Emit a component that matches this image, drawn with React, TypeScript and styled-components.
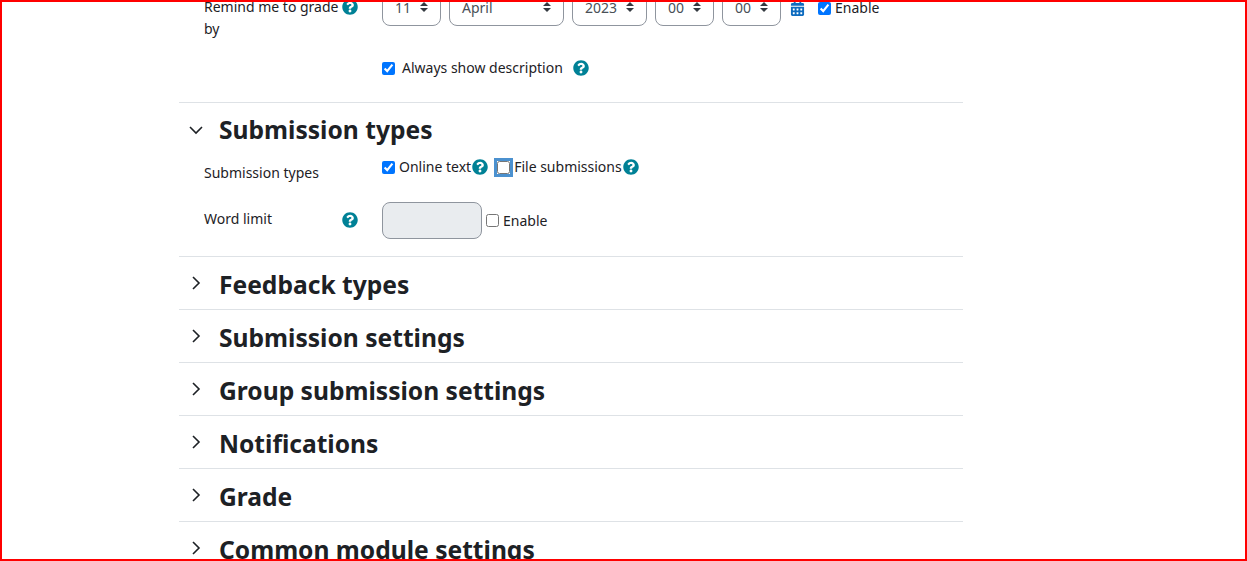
import React from "react";
import styled, { createGlobalStyle } from "styled-components";
import { FaQuestionCircle, FaCalendarAlt } from "react-icons/fa";

const Global = createGlobalStyle`
  html, body {
    margin: 0;
    padding: 0;
    background: #fff;
  }
  body {
    font-family: "Noto Sans", "Open Sans", sans-serif;
    font-size: 14px;
    color: #1d2125;
  }
`;

const Frame = styled.div`
  box-sizing: border-box;
  height: 561px;
  border: 2px solid #ff0000;
  overflow: hidden;
  background: #fff;
`;

const Form = styled.form`
  width: 784px;
  margin: -14px 0 0 177px;
`;

const DateBlock = styled.div`
  padding-bottom: 23px;
  border-bottom: 1px solid #dee2e6;
`;

const Row = styled.div<{ $mb?: number }>`
  display: flex;
  margin-bottom: ${({ $mb }) => $mb ?? 0}px;
`;

const LabelCol = styled.div`
  box-sizing: border-box;
  width: 203px;
  flex: none;
  padding-left: 25px;
  display: flex;
  justify-content: space-between;
`;

const LabelText = styled.span<{ $pt?: number; $w?: number }>`
  line-height: 22px;
  padding-top: ${({ $pt }) => $pt ?? 0}px;
  width: ${({ $w }) => ($w ? `${$w}px` : "auto")};
`;

const Controls = styled.div<{ $gap?: number; $pt?: number }>`
  display: flex;
  align-items: center;
  align-self: flex-start;
  gap: ${({ $gap }) => $gap ?? 0}px;
  padding-top: ${({ $pt }) => $pt ?? 0}px;
`;

const SelectBox = styled.div<{ $w: number }>`
  box-sizing: border-box;
  width: ${({ $w }) => $w}px;
  height: 38px;
  border: 1px solid #8f959e;
  border-radius: 8px;
  padding: 0 12px;
  display: flex;
  align-items: center;
  justify-content: space-between;
  color: #495057;
`;

const CaretSvg = styled.svg`
  width: 8px;
  height: 10px;
  flex: none;
  fill: #343a40;
`;

const Select = ({ w, value }: { w: number; value: string }) => (
  <SelectBox $w={w}>
    <span>{value}</span>
    <CaretSvg viewBox="0 0 4 5">
      <path d="M2 0L0 2h4zm0 5L0 3h4z" />
    </CaretSvg>
  </SelectBox>
);

const CalendarIcon = styled(FaCalendarAlt)`
  color: #0f6cbf;
  font-size: 15px;
  flex: none;
  margin: 0 13px 0 9px;
`;

const Help = styled(FaQuestionCircle)<{ $ml?: number; $mr?: number; $mt?: number }>`
  color: #008196;
  font-size: 16px;
  flex: none;
  margin-left: ${({ $ml }) => $ml ?? 0}px;
  margin-right: ${({ $mr }) => $mr ?? 0}px;
  margin-top: ${({ $mt }) => $mt ?? 0}px;
`;

const Check = styled.input.attrs({ type: "checkbox" })<{ $focus?: boolean; $ml?: number }>`
  width: 13px;
  height: 13px;
  margin: 0 0 0 ${({ $ml }) => $ml ?? 0}px;
  flex: none;
  box-shadow: ${({ $focus }) =>
    $focus ? "0 0 0 3px rgba(15, 108, 191, 0.75)" : "none"};
`;

const CheckText = styled.span<{ $ml?: number }>`
  margin-left: ${({ $ml }) => $ml ?? 4}px;
  line-height: 22px;
  white-space: nowrap;
`;

const SectionHead = styled.div<{ $open?: boolean }>`
  box-sizing: border-box;
  display: flex;
  align-items: center;
  height: ${({ $open }) => ($open ? 53 : 53)}px;
  padding: ${({ $open }) => ($open ? 1 : 4)}px 0 0 10px;
  border-bottom: ${({ $open }) => ($open ? "none" : "1px solid #dee2e6")};
`;

const ChevronBox = styled.span<{ $open?: boolean }>`
  width: 30px;
  flex: none;
  display: flex;
  margin-top: ${({ $open }) => ($open ? 0 : -4)}px;
`;

const Chevron = styled.svg`
  width: 14px;
  height: 14px;
  fill: none;
  stroke: #1d2125;
  stroke-width: 1.6;
`;

const SectionTitle = styled.h3`
  margin: 0;
  font-size: 24.6px;
  font-weight: 700;
  line-height: 28px;
  white-space: nowrap;
`;

const OpenBody = styled.div`
  border-bottom: 1px solid #dee2e6;
  padding-bottom: 17px;
`;

const WordInput = styled.div`
  box-sizing: border-box;
  width: 100px;
  height: 37px;
  background: #e9ecef;
  border: 1px solid #8f959e;
  border-radius: 8px;
`;

const collapsed = [
  "Feedback types",
  "Submission settings",
  "Group submission settings",
  "Notifications",
  "Grade",
  "Common module settings",
];

export default function App() {
  return (
    <Frame>
      <Global />
      <Form>
        <DateBlock>
          <Row $mb={17}>
            <LabelCol>
              <LabelText $pt={8} $w={140}>Remind me to grade by</LabelText>
              <Help $mr={24} $mt={11} />
            </LabelCol>
            <Controls $gap={8}>
              <Select w={59} value="11" />
              <Select w={115} value="April" />
              <Select w={75} value="2023" />
              <Select w={59} value="00" />
              <Select w={59} value="00" />
            </Controls>
            <Controls $pt={9}>
              <CalendarIcon />
              <Check defaultChecked />
              <CheckText>Enable</CheckText>
            </Controls>
          </Row>
          <Row>
            <LabelCol />
            <Controls>
              <Check defaultChecked />
              <CheckText $ml={7}>Always show description</CheckText>
              <Help $ml={10} />
            </Controls>
          </Row>
        </DateBlock>

        <SectionHead $open>
          <ChevronBox $open>
            <Chevron viewBox="0 0 14 14">
              <path d="M1 4l6 6 6-6" />
            </Chevron>
          </ChevronBox>
          <SectionTitle>Submission types</SectionTitle>
        </SectionHead>
        <OpenBody>
          <Row $mb={18}>
            <LabelCol>
              <LabelText $pt={6}>Submission types</LabelText>
            </LabelCol>
            <Controls>
              <Check defaultChecked />
              <CheckText>Online text</CheckText>
              <Help $ml={1} />
              <Check $focus $ml={9} />
              <CheckText>File submissions</CheckText>
              <Help $ml={1} />
            </Controls>
          </Row>
          <Row>
            <LabelCol>
              <LabelText $pt={6}>Word limit</LabelText>
              <Help $mr={24} $mt={10} />
            </LabelCol>
            <Controls>
              <WordInput />
              <Check $ml={4} />
              <CheckText>Enable</CheckText>
            </Controls>
          </Row>
        </OpenBody>

        {collapsed.map((title) => (
          <SectionHead key={title}>
            <ChevronBox>
              <Chevron viewBox="0 0 14 14">
                <path d="M4 1l6 6-6 6" />
              </Chevron>
            </ChevronBox>
            <SectionTitle>{title}</SectionTitle>
          </SectionHead>
        ))}
      </Form>
    </Frame>
  );
}
